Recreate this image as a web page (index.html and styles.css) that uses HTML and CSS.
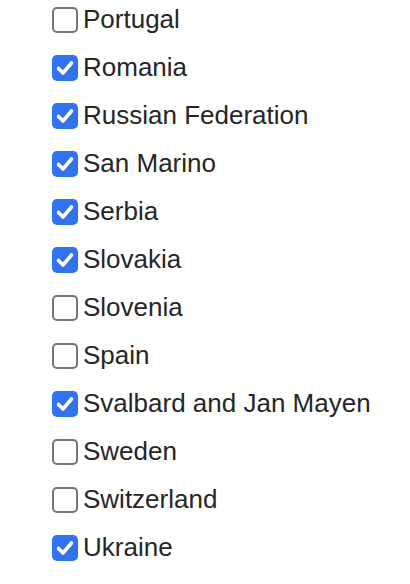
FILE: index.html
```html
<!DOCTYPE html>
<html>
<head>
<meta charset="utf-8">
<link rel="stylesheet" href="styles.css">
</head>
<body>
<ul class="list">
  <li class="row"><span class="box"></span><span class="label">Portugal</span></li>
  <li class="row"><span class="box checked"><svg viewBox="0 0 26 26"><path d="M6.5 13.5 L11 18 L19.5 8" /></svg></span><span class="label">Romania</span></li>
  <li class="row"><span class="box checked"><svg viewBox="0 0 26 26"><path d="M6.5 13.5 L11 18 L19.5 8" /></svg></span><span class="label">Russian Federation</span></li>
  <li class="row"><span class="box checked"><svg viewBox="0 0 26 26"><path d="M6.5 13.5 L11 18 L19.5 8" /></svg></span><span class="label">San Marino</span></li>
  <li class="row"><span class="box checked"><svg viewBox="0 0 26 26"><path d="M6.5 13.5 L11 18 L19.5 8" /></svg></span><span class="label">Serbia</span></li>
  <li class="row"><span class="box checked"><svg viewBox="0 0 26 26"><path d="M6.5 13.5 L11 18 L19.5 8" /></svg></span><span class="label">Slovakia</span></li>
  <li class="row"><span class="box"></span><span class="label">Slovenia</span></li>
  <li class="row"><span class="box"></span><span class="label">Spain</span></li>
  <li class="row"><span class="box checked"><svg viewBox="0 0 26 26"><path d="M6.5 13.5 L11 18 L19.5 8" /></svg></span><span class="label">Svalbard and Jan Mayen</span></li>
  <li class="row"><span class="box"></span><span class="label">Sweden</span></li>
  <li class="row"><span class="box"></span><span class="label">Switzerland</span></li>
  <li class="row"><span class="box checked"><svg viewBox="0 0 26 26"><path d="M6.5 13.5 L11 18 L19.5 8" /></svg></span><span class="label">Ukraine</span></li>
</ul>
</body>
</html>
```
FILE: styles.css
```css
html, body {
  margin: 0;
  padding: 0;
  background: #ffffff;
}
body {
  font-family: "Liberation Sans", Arial, sans-serif;
  color: #262626;
}
.list {
  list-style: none;
  margin: 0;
  padding: 7px 0 0 52px;
  display: flex;
  flex-direction: column;
  gap: 22px;
}
.row {
  display: flex;
  align-items: center;
  height: 26px;
}
.box {
  box-sizing: border-box;
  width: 26px;
  height: 26px;
  border: 2px solid #767676;
  border-radius: 5px;
  background: #ffffff;
  flex: none;
  display: flex;
}
.box.checked {
  border: none;
  background: #2f74ec;
}
.box svg {
  width: 26px;
  height: 26px;
}
.box path {
  fill: none;
  stroke: #ffffff;
  stroke-width: 3.6;
  stroke-linecap: round;
  stroke-linejoin: round;
}
.label {
  margin-left: 5px;
  margin-bottom: 2px;
  font-size: 26px;
  line-height: 26px;
}
```
